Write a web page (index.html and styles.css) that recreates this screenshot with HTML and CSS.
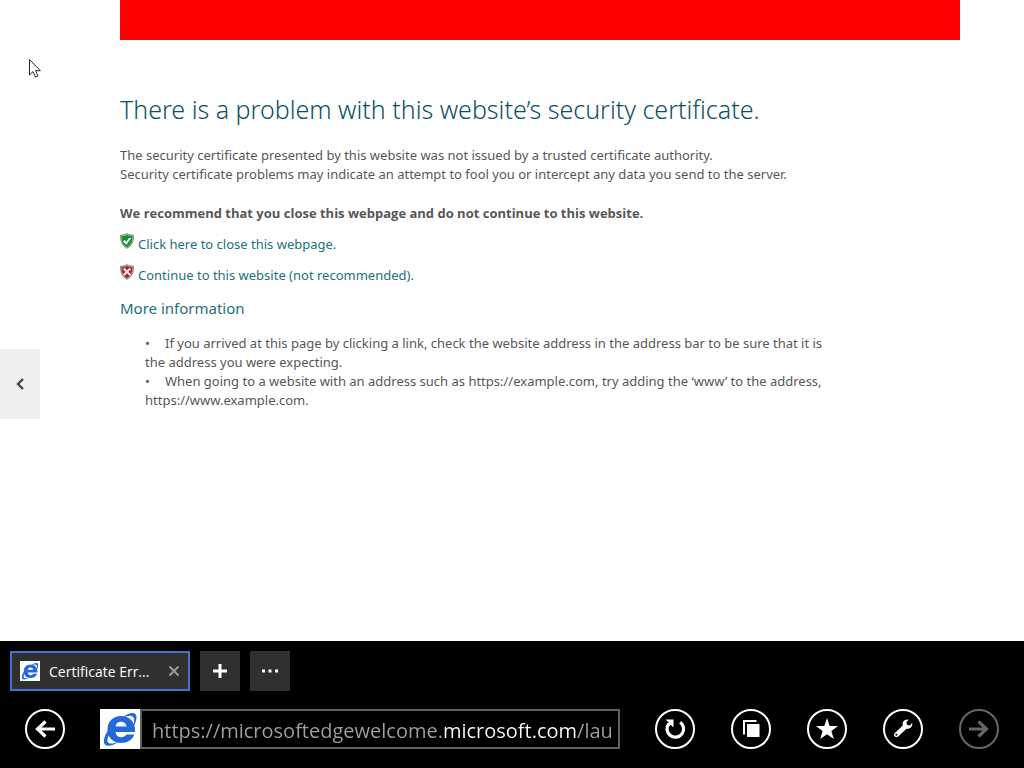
FILE: index.html
```html
<!DOCTYPE html>
<html lang="en">
<head>
    <meta charset="UTF-8">
    <meta name="viewport" content="width=device-width, initial-scale=1.0">
    <title>Certificate Error</title>
    <link rel="stylesheet" href="styles.css">
</head>
<body>
    <svg class="sprite" aria-hidden="true">
        <symbol id="ie-logo" viewBox="0 0 40 40">
            <path fill="#2468dc" fill-rule="evenodd" d="M21 7C29 7 35 12.500 35 20.500V23H15.500C16 26.500 18 28.300 21 28.300C23.500 28.300 25.300 27.200 26.300 25.500H34.300C32.500 31 27.500 34 21 34C13 34 7.500 28.500 7.500 20.500C7.500 12.500 13 7 21 7ZM15.500 17.500H26.500C26 14.500 24 12.800 21 12.800C18 12.800 16 14.500 15.500 17.500Z"/>
            <path fill="#2468dc" d="M33.500 15.500C35 10.500 34 6.800 30 6.800C27.500 6.800 24.500 7.800 21.500 9.800C25.500 5.500 30.500 3 34 4.200C38 5.500 36.500 11 34.500 16ZM7.500 22C3.500 28.500 2.500 34.500 6 36.300C9 37.800 14 36 18.500 33C14 34.500 9.500 35.500 8 33.300C6.500 31 8 27.500 10.500 23Z"/>
        </symbol>
    </svg>

    <main class="page">
        <div class="warning-bar"></div>

        <!-- Message -->
        <h1>There is a problem with this website’s security certificate.</h1>
        <p>The security certificate presented by this website was not issued by a trusted certificate authority.<br>
        Security certificate problems may indicate an attempt to fool you or intercept any data you send to the server.</p>
        <p class="recommend">We recommend that you close this webpage and do not continue to this website.</p>

        <div class="action">
            <svg width="14" height="16" viewBox="0 0 14 16" aria-hidden="true">
                <path d="M7 .6C9 1.900 11 2.200 13.300 2.100C13.800 8 12 12.700 7 15.300C2 12.700.2 8 .7 2.100C3 2.200 5 1.900 7 .6Z" fill="#b9c4b9" stroke="#7d887d"/>
                <path d="M7 1.800C8.600 2.900 10.500 3.200 12.500 3.200C12.600 8.300 10.900 12 7 14.200C3.100 12 1.400 8.300 1.500 3.200C3.500 3.200 5.400 2.900 7 1.800Z" fill="#16912a"/>
                <path d="M3.800 7.600L6.200 10.200L10.300 5" fill="none" stroke="#fff" stroke-width="1.900"/>
            </svg>
            <a href="#">Click here to close this webpage.</a>
        </div>
        <div class="action">
            <svg width="14" height="16" viewBox="0 0 14 16" aria-hidden="true">
                <path d="M7 .6C9 1.900 11 2.200 13.300 2.100C13.800 8 12 12.700 7 15.300C2 12.700.2 8 .7 2.100C3 2.200 5 1.900 7 .6Z" fill="#cfc0c0" stroke="#8b8080"/>
                <path d="M7 1.800C8.600 2.900 10.500 3.200 12.500 3.200C12.600 8.300 10.900 12 7 14.200C3.100 12 1.400 8.300 1.500 3.200C3.500 3.200 5.400 2.900 7 1.800Z" fill="#b51f30"/>
                <path d="M3.700 4.500L10.300 11.100M10.300 4.500L3.700 11.100" fill="none" stroke="#fff" stroke-width="1.900"/>
            </svg>
            <a href="#">Continue to this website (not recommended).</a>
        </div>
        <a class="more" href="#">More information</a>

        <ul class="details">
            <li>If you arrived at this page by clicking a link, check the website address in the address bar to be sure that it is the address you were expecting.</li>
            <li>When going to a website with an address such as https://example.com, try adding the ‘www’ to the address, https://www.example.com.</li>
        </ul>

        <!-- Flip back button on the left edge -->
        <button class="flip" type="button" aria-label="Previous page">
            <svg width="10" height="12" viewBox="0 0 10 12"><path d="M8 1L3 6L8 11" fill="none" stroke="#444" stroke-width="2.400"/></svg>
        </button>
        <svg class="cursor" width="14" height="21" viewBox="0 0 14 21" aria-hidden="true">
            <path d="M1.500 1.500V17L5 13.600L7.500 19L10 17.900L7.600 12.700H12.300Z" fill="#fff" stroke="#222"/>
        </svg>
    </main>

    <footer class="chrome">
        <div class="tabs">
            <div class="tab">
                <svg class="favicon" width="20" height="20"><use href="#ie-logo"/></svg>
                <span class="tab-title">Certificate Err...</span>
                <button class="tab-close" type="button" aria-label="Close tab">
                    <svg width="12" height="12" viewBox="0 0 12 12"><path d="M1.500 1.500L10.500 10.500M10.500 1.500L1.500 10.500" stroke="#999" stroke-width="2"/></svg>
                </button>
            </div>
            <button class="tab-button" type="button" aria-label="New tab">
                <svg width="14" height="14" viewBox="0 0 14 14"><path d="M7 0V14M0 7H14" stroke="#fff" stroke-width="3"/></svg>
            </button>
            <button class="tab-button" type="button" aria-label="Tab tools">
                <svg width="16" height="4" viewBox="0 0 16 4"><path d="M0 .5H3V3.500H0ZM6.500.5H9.500V3.500H6.500ZM13 .5H16V3.500H13Z" fill="#fff"/></svg>
            </button>
        </div>

        <div class="toolbar">
            <button class="round" type="button" aria-label="Back">
                <svg width="40" height="40" viewBox="0 0 40 40"><path d="M30 20H12M20.500 12.500L12.500 20L20.500 27.500" fill="none" stroke="#fff" stroke-width="3.200"/></svg>
            </button>
            <div class="address">
                <svg class="favicon" width="40" height="40"><use href="#ie-logo"/></svg>
                <div class="address-box">
                    <input type="text" aria-label="Address" value="https://microsoftedgewelcome.microsoft.com/launch">
                </div>
            </div>
            <div class="commands">
                <button class="round" type="button" aria-label="Refresh">
                    <svg width="40" height="40" viewBox="0 0 40 40">
                        <path d="M25.200 13.200A8.300 8.300 0 1 1 14 14.500" fill="none" stroke="#fff" stroke-width="3.200"/>
                        <path d="M10.500 10.500H18.500V18.500L15.800 15.800L13.500 17.500L11.800 15.800L13.800 13.500Z" fill="#fff"/>
                    </svg>
                </button>
                <button class="round" type="button" aria-label="Pages">
                    <svg width="40" height="40" viewBox="0 0 40 40">
                        <path d="M13 25.500V12H25.500" fill="none" stroke="#fff" stroke-width="2"/>
                        <path d="M16 15H28.500V28H16Z" fill="#fff"/>
                    </svg>
                </button>
                <button class="round" type="button" aria-label="Favorites">
                    <svg width="40" height="40" viewBox="0 0 40 40"><path d="M20 9L22.700 17H31L24.400 22L26.800 30L20 25.200L13.200 30L15.600 22L9 17H17.300Z" fill="#fff"/></svg>
                </button>
                <button class="round" type="button" aria-label="Page tools">
                    <svg width="40" height="40" viewBox="0 0 40 40">
                        <path fill="#fff" fill-rule="evenodd" d="M25.500 10.600L23.300 13.500L24.300 16L27 16.500L29.200 13.800C30 17.500 27 20.500 23.500 19.700L15.200 27.600C12.500 29.300 9.800 26.600 11.600 24.200L19.800 16.400C18.800 13 21.800 9.800 25.500 10.600ZM13.400 24.700A1 1 0 1 0 13.400 26.700A1 1 0 1 0 13.400 24.700Z"/>
                    </svg>
                </button>
                <button class="round" type="button" aria-label="Forward" disabled>
                    <svg width="40" height="40" viewBox="0 0 40 40"><path d="M10 20H28M19.500 12.500L27.500 20L19.500 27.500" fill="none" stroke="#666" stroke-width="3.200"/></svg>
                </button>
            </div>
        </div>
    </footer>
</body>
</html>
```
FILE: styles.css
```css
* {
    box-sizing: border-box;
}

body {
    display: flex;
    flex-direction: column;
    min-height: 100vh;
    margin: 0;
    background: #fff;
    color: #575757;
    font-family: "Noto Sans", "Open Sans", sans-serif;
    font-size: 13px;
    line-height: 19px;
}

.sprite {
    position: absolute;
    width: 0;
    height: 0;
}

button {
    display: flex;
    align-items: center;
    justify-content: center;
    padding: 0;
    border: 0;
    background: none;
}

svg {
    display: block;
    flex: none;
}

/* Page */
.page {
    position: relative;
    flex: 1;
    padding: 0 64px 24px 120px;
}

.warning-bar {
    height: 40px;
    background: #f00;
}

h1 {
    margin: 51px 0 19px;
    color: #0b5166;
    font-size: 25px;
    font-weight: 350;
    line-height: 36px;
}

p {
    margin: 0 0 20px;
}

.recommend {
    margin-bottom: 10px;
    font-family: "Open Sans", sans-serif;
    font-weight: 700;
}

a {
    color: #226f80;
    text-decoration: none;
}

a:hover {
    text-decoration: underline;
}

.action {
    display: flex;
    gap: 4px;
    margin-bottom: 8px;
    line-height: 23px;
}

.more {
    display: block;
    margin-top: 9px;
    font-size: 15px;
    line-height: 24px;
}

.details {
    max-width: 715px;
    margin: 14px 0 0;
    padding: 0 0 0 25px;
    list-style: none;
}

.details li::before {
    content: "•";
    display: inline-block;
    width: 20px;
}

.flip {
    position: absolute;
    top: 349px;
    left: 0;
    width: 40px;
    height: 70px;
    background: #efefef;
}

.cursor {
    position: absolute;
    top: 58px;
    left: 28px;
}

/* Browser bar */
.chrome {
    padding: 10px 0 19px;
    background: #000;
    font-family: "Open Sans", sans-serif;
}

.tabs {
    display: flex;
    gap: 10px;
    padding: 0 10px;
    margin-bottom: 18px;
}

.tab {
    display: flex;
    align-items: center;
    width: 180px;
    height: 40px;
    padding: 0 8px;
    border: 2px solid #4472c9;
    background: #303030;
    color: #fff;
    font-size: 14px;
}

.favicon {
    background: #fff;
}

.tab-title {
    flex: 1;
    margin-left: 9px;
    white-space: nowrap;
}

.tab-button {
    width: 40px;
    height: 40px;
    background: #303030;
}

.toolbar {
    display: flex;
    align-items: center;
    gap: 35px;
    padding: 0 25px;
}

.round {
    flex: none;
    width: 40px;
    height: 40px;
    border: 2px solid #fff;
    border-radius: 50%;
}

.round:disabled {
    border-color: #666;
}

.address {
    display: flex;
    flex: 1;
    min-width: 0;
}

.address-box {
    display: flex;
    flex: 1;
    min-width: 0;
    height: 40px;
    padding: 2px 7px 0 10px;
    border: 2px solid #606060;
}

/* The domain is brighter than the rest of the address */
.address input {
    flex: 1;
    min-width: 0;
    padding: 0;
    border: 0;
    outline: 0;
    background: linear-gradient(to right, #a0a0a0 290px, #fff 290px 425px, #a0a0a0 425px);
    -webkit-background-clip: text;
    background-clip: text;
    -webkit-text-fill-color: transparent;
    color: #fff;
    font-family: inherit;
    font-size: 20px;
}

.commands {
    display: flex;
    gap: 36px;
}
```
